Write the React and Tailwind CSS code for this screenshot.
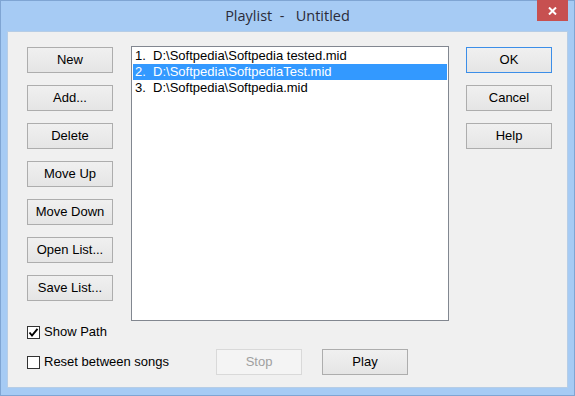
const ui = "font-['Liberation_Sans',Arial,sans-serif] text-[13px] leading-[16px] text-black"

function Button({ children, primary, disabled, className = '' }) {
  let tone = 'border-[#adadad] bg-gradient-to-b from-[#f0f0f0] to-[#e5e5e5] text-black'
  if (primary) tone = 'border-[#3c8ee8] bg-gradient-to-b from-[#f0f0f0] to-[#e5e5e5] text-black'
  if (disabled) tone = 'border-[#d9d9d9] bg-[#f4f4f4] text-[#a0a0a0]'
  return (
    <div className={`w-[86px] h-[26px] border flex items-center justify-center ${tone} ${className}`}>
      {children}
    </div>
  )
}

function Checkbox({ checked, label }) {
  return (
    <div className="flex items-center h-[16px] gap-[4px]">
      <div className="w-[13px] h-[13px] border border-[#333] bg-white flex items-center justify-center">
        {checked && (
          <svg width="11" height="11" viewBox="0 0 11 11">
            <path d="M1.5 5.5 L4 8.5 L9.5 1.8" fill="none" stroke="#000" strokeWidth="1.9" />
          </svg>
        )}
      </div>
      <span>{label}</span>
    </div>
  )
}

const items = [
  'D:\\Softpedia\\Softpedia tested.mid',
  'D:\\Softpedia\\SoftpediaTest.mid',
  'D:\\Softpedia\\Softpedia.mid',
]

export default function App() {
  return (
    <div className={`w-[575px] h-[396px] bg-[#a6cbf4] border border-[#7fa5d3] flex flex-col ${ui}`}>

      {/* Title bar */}
      <div className="relative h-[30px] flex items-center justify-center shrink-0">
        <span className="font-['Open_Sans',sans-serif] text-[14.5px] text-[#2b2b3a] whitespace-pre">
          {'Playlist  -   Untitled'}
        </span>
        <div className="absolute right-[6px] -top-[1px] w-[31px] h-[21px] bg-[#c75050] flex items-center justify-center">
          <svg width="9" height="8" viewBox="0 0 9 8">
            <path d="M1 0.5 L8 7.5 M8 0.5 L1 7.5" stroke="#fff" strokeWidth="2" />
          </svg>
        </div>
      </div>

      {/* Client area */}
      <div className="ml-[6px] mr-[6px] h-[357px] border border-[#b6cde6] bg-[#f0f0f0] pt-[14px] pl-[19px]">

        <div className="flex items-start">
          <div className="w-[86px] mt-[1px] flex flex-col gap-[12px]">
            <Button>New</Button>
            <Button>Add...</Button>
            <Button>Delete</Button>
            <Button>Move Up</Button>
            <Button>Move Down</Button>
            <Button>Open List...</Button>
            <Button>Save List...</Button>
          </div>

          {/* List box */}
          <div className="ml-[18px] w-[318px] h-[275px] border border-[#828790] bg-white p-[1px]">
            {items.map((name, i) => (
              <div
                key={i}
                className={`h-[16px] pl-[2px] whitespace-pre ${i === 1 ? 'bg-[#3399ff] text-white' : ''}`}
              >
                {`${i + 1}.  ${name}`}
              </div>
            ))}
          </div>

          <div className="ml-[17px] mt-[1px] flex flex-col gap-[12px]">
            <Button primary>OK</Button>
            <Button>Cancel</Button>
            <Button>Help</Button>
          </div>
        </div>

        <div className="flex items-start mt-[3px]">
          <div className="w-[189px] flex flex-col gap-[14px]">
            <Checkbox checked label="Show Path" />
            <Checkbox label="Reset between songs" />
          </div>
          <div className="mt-[25px] flex gap-[20px]">
            <Button disabled>Stop</Button>
            <Button>Play</Button>
          </div>
        </div>
      </div>
    </div>
  )
}
